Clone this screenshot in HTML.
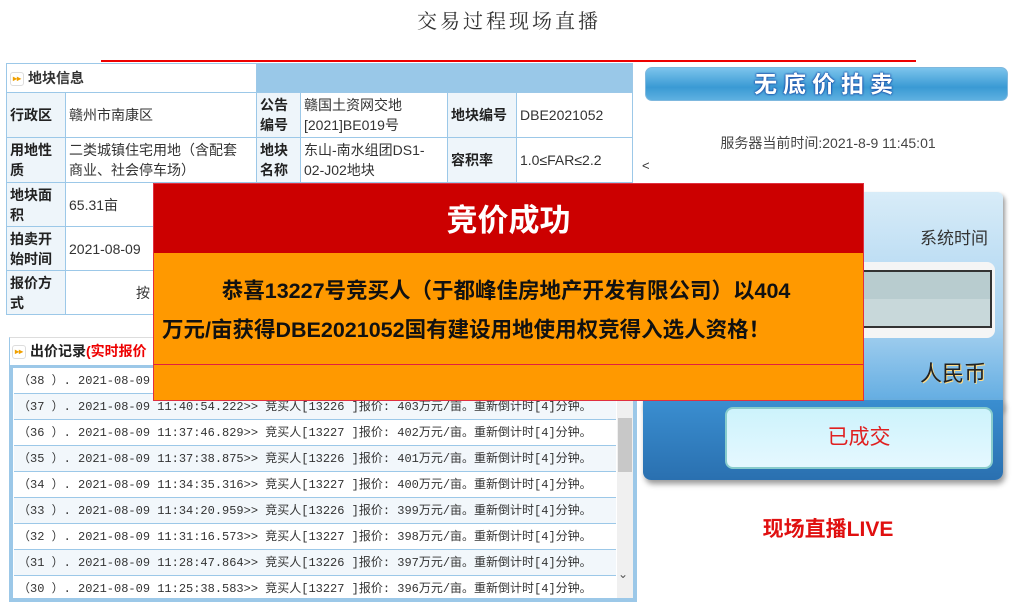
<!DOCTYPE html>
<html><head><meta charset="utf-8"><style>
*{margin:0;padding:0;box-sizing:border-box}
body{width:1018px;height:606px;background:#fff;position:relative;overflow:hidden;font-family:"Liberation Sans","Noto Sans CJK SC",sans-serif;color:#333}
.a{position:absolute}
table{border-collapse:collapse;position:absolute;left:6px;top:63px;width:627px;font-size:14px}
td{border:1px solid #9cc8e8;padding:0 3px;line-height:20px;vertical-align:middle}
td.l{background:#eef5fa;font-weight:bold;color:#222;font-size:14px}
.ic{display:inline-block;width:14px;height:14px;border:1px solid #ddd;border-radius:3px;color:#f0a000;font-size:8px;line-height:12px;text-align:center;vertical-align:middle;margin-right:4px}
.row{position:absolute;left:14px;width:602px;height:26px;border-bottom:1px solid #9cc8e8;font-family:"Liberation Mono","Noto Sans CJK SC",monospace;font-size:12px;line-height:26px;padding-left:4px;color:#333;white-space:nowrap}
</style></head><body>
<div class="a" style="left:0;width:1018px;top:5px;text-align:center;font-family:'Liberation Serif','Noto Serif CJK SC',serif;font-size:20px;letter-spacing:3px;color:#333">交易过程现场直播</div>
<div class="a" style="left:101px;top:60px;width:815px;height:2px;background:#e00"></div>

<table>
<tr style="height:29px"><td colspan="2" style="font-weight:bold;font-size:14px"><span class="ic">▸▸</span>地块信息</td><td colspan="4" style="background:#99c8e8"></td></tr>
<tr style="height:45px"><td class="l" style="width:59px">行政区</td><td style="width:191px">赣州市南康区</td><td class="l" style="width:44px">公告<br>编号</td><td style="width:147px">赣国土资网交地<br>[2021]BE019号</td><td class="l" style="width:69px">地块编号</td><td>DBE2021052</td></tr>
<tr style="height:45px"><td class="l">用地性<br>质</td><td>二类城镇住宅用地（含配套<br>商业、社会停车场）</td><td class="l">地块<br>名称</td><td>东山-南水组团DS1-<br>02-J02地块</td><td class="l">容积率</td><td>1.0≤FAR≤2.2</td></tr>
<tr style="height:44px"><td class="l">地块面<br>积</td><td>65.31亩</td><td></td><td></td><td></td><td></td></tr>
<tr style="height:44px"><td class="l">拍卖开<br>始时间</td><td>2021-08-09</td><td></td><td></td><td></td><td></td></tr>
<tr style="height:44px"><td class="l">报价方<br>式</td><td colspan="5" style="padding-left:70px">按</td></tr>
</table>

<div class="a" style="left:9px;top:337px;width:628px;height:264px;border:1px solid #9cc8e8;border-top:1px solid #ddd"></div>
<div class="a" style="left:12px;top:341px;font-size:14px;font-weight:bold;color:#222"><span class="ic">▸▸</span>出价记录<span style="color:#e00">(实时报价</span></div>
<div class="a" style="left:9px;top:365px;width:628px;height:237px;border:4px solid #9cc8e8;border-top:3px solid #9cc8e8;background:#fff"></div>
<div class="a" style="left:617px;top:368px;width:16px;height:230px;background:#f0f0f0"></div>
<div class="a" style="left:618px;top:418px;width:14px;height:54px;background:#c8c8c8"></div>
<div class="a" style="left:618px;top:567px;font-size:12px;color:#555">⌄</div>
<div class="row" style="top:368px">（38 ）. 2021-08-09 11:</div>
<div class="row" style="top:394px;background:#f2f7fb">（37 ）. 2021-08-09 11:40:54.222>> 竞买人[13226 ]报价: 403万元/亩。重新倒计时[4]分钟。</div>
<div class="row" style="top:420px">（36 ）. 2021-08-09 11:37:46.829>> 竞买人[13227 ]报价: 402万元/亩。重新倒计时[4]分钟。</div>
<div class="row" style="top:446px;background:#f2f7fb">（35 ）. 2021-08-09 11:37:38.875>> 竞买人[13226 ]报价: 401万元/亩。重新倒计时[4]分钟。</div>
<div class="row" style="top:472px">（34 ）. 2021-08-09 11:34:35.316>> 竞买人[13227 ]报价: 400万元/亩。重新倒计时[4]分钟。</div>
<div class="row" style="top:498px;background:#f2f7fb">（33 ）. 2021-08-09 11:34:20.959>> 竞买人[13226 ]报价: 399万元/亩。重新倒计时[4]分钟。</div>
<div class="row" style="top:524px">（32 ）. 2021-08-09 11:31:16.573>> 竞买人[13227 ]报价: 398万元/亩。重新倒计时[4]分钟。</div>
<div class="row" style="top:550px;background:#f2f7fb">（31 ）. 2021-08-09 11:28:47.864>> 竞买人[13226 ]报价: 397万元/亩。重新倒计时[4]分钟。</div>
<div class="row" style="top:576px;border-bottom:none">（30 ）. 2021-08-09 11:25:38.583>> 竞买人[13227 ]报价: 396万元/亩。重新倒计时[4]分钟。</div>

<div class="a" style="left:645px;top:67px;width:363px;height:34px;border-radius:7px;border:1px solid #7fb8de;background:linear-gradient(#7cc4ec,#3a9ad4 60%,#5eb0e0);text-align:center;font-size:23px;font-weight:bold;color:#fff;letter-spacing:6px;line-height:32px;text-shadow:0 0 2px #1040a0,0 0 2px #1040a0">无底价拍卖</div>
<div class="a" style="left:640px;width:376px;top:133px;text-align:center;font-size:14px;color:#444">服务器当前时间:2021-8-9 11:45:01</div>
<div class="a" style="left:642px;top:158px;font-size:13px;color:#333">&lt;</div>

<div class="a" style="left:643px;top:192px;width:360px;height:220px;border-radius:6px;background:linear-gradient(#d8ecf8,#a8d2f0 60%,#5aa8e0);box-shadow:2px 3px 4px #999"></div>
<div class="a" style="left:643px;top:400px;width:360px;height:80px;border-radius:0 0 8px 8px;background:linear-gradient(#3a8ed0,#2a70b0);box-shadow:2px 4px 6px #999"></div>
<div class="a" style="left:920px;top:224px;font-size:17px;color:#333">系统时间</div>
<div class="a" style="left:855px;top:262px;width:140px;height:76px;border-radius:8px;background:#f5f5f5"></div>
<div class="a" style="left:860px;top:270px;width:132px;height:58px;border:2px solid #333;background:linear-gradient(#b8cccf 50%,#c8d8da 50%)"></div>
<div class="a" style="left:920px;top:356px;font-size:22px;color:#222;text-shadow:1px 1px 0 #fd8">人民币</div>
<div class="a" style="left:725px;top:407px;width:268px;height:62px;border-radius:8px;border:2px solid #8cc;background:linear-gradient(#cdf3fc,#e5f8ff);text-align:center;line-height:58px;font-size:21px;color:#e02020">已成交</div>
<div class="a" style="left:640px;width:376px;top:513px;text-align:center;font-size:21px;font-weight:bold;color:#e01010">现场直播LIVE</div>

<div class="a" style="left:153px;top:183px;width:711px;height:218px;background:#ff9900;border:1px solid #e03040"></div>
<div class="a" style="left:154px;top:184px;width:709px;height:69px;background:#cc0000;text-align:center;color:#fff;font-size:31px;font-weight:bold;line-height:74px">竞价成功</div>
<div class="a" style="left:154px;top:364px;width:709px;height:1px;background:#e02040"></div>
<div class="a" style="left:162px;top:272px;width:700px;font-size:21.5px;font-weight:bold;color:#111;line-height:39px;white-space:nowrap">&nbsp;&nbsp;&nbsp;&nbsp;&nbsp;&nbsp;&nbsp;&nbsp;&nbsp;&nbsp;恭喜13227号竞买人（于都峰佳房地产开发有限公司）以404<br>万元/亩获得DBE2021052国有建设用地使用权竞得入选人资格！</div>
</body></html>
